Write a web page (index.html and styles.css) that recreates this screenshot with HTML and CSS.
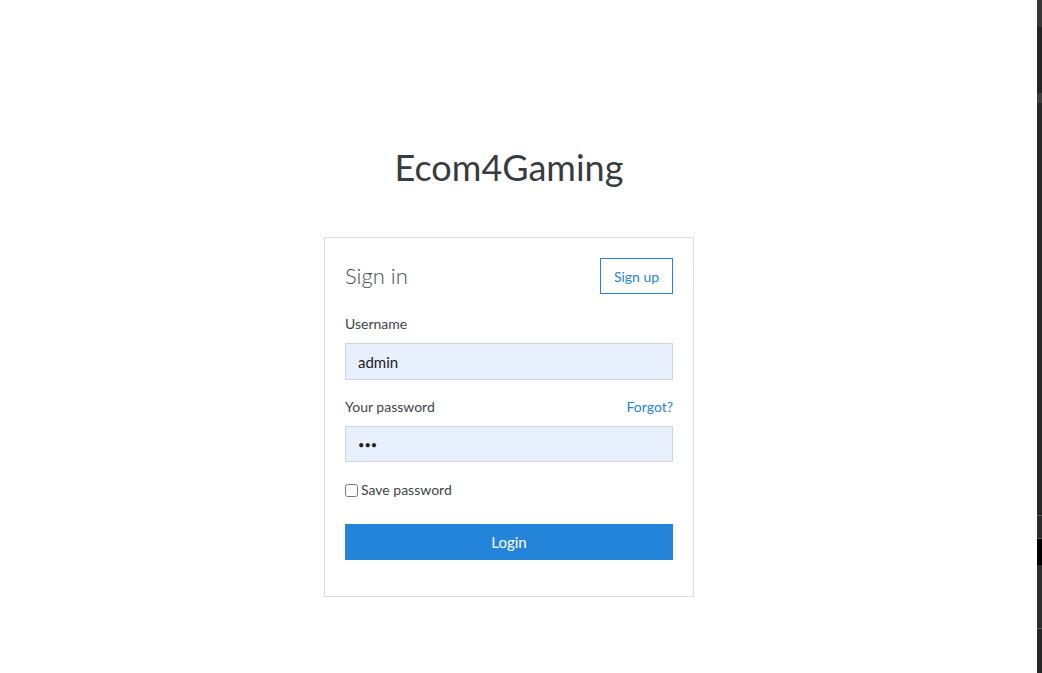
FILE: index.html
```html
<!DOCTYPE html>
<html lang="en">
<head>
<meta charset="utf-8">
<title>Ecom4Gaming - Sign in</title>
<link rel="stylesheet" href="styles.css">
</head>
<body>
<div class="page">
  <main class="main">
    <h1 class="brand">Ecom4Gaming</h1>
    <div class="card">
      <div class="card-head">
        <h2 class="card-title">Sign in</h2>
        <a class="btn-outline" href="#">Sign up</a>
      </div>
      <form class="form">
        <div class="field field-first">
          <label class="label" for="username">Username</label>
          <input class="input" id="username" type="text" value="admin">
        </div>
        <div class="field field-next">
          <div class="label-row">
            <label class="label" for="password">Your password</label>
            <a class="link" href="#">Forgot?</a>
          </div>
          <input class="input input-pass" id="password" type="password" value="abc">
        </div>
        <label class="check">
          <input class="check-box" type="checkbox">
          <span>Save password</span>
        </label>
        <button class="btn-primary" type="button">Login</button>
      </form>
    </div>
  </main>
  <aside class="side">
    <div class="seg seg-a"></div>
    <div class="seg seg-b"></div>
    <div class="seg seg-c"></div>
    <div class="seg seg-d"></div>
    <div class="seg seg-e"></div>
    <div class="seg seg-f"></div>
    <div class="seg seg-g"></div>
  </aside>
</div>
</body>
</html>
```
FILE: styles.css
```css
* { box-sizing: border-box; }
html, body { margin: 0; padding: 0; height: 100%; }
body {
  font-family: Lato, "Noto Sans", sans-serif;
  color: #3d4145;
  background: #fff;
  overflow: hidden;
}
.page {
  display: flex;
  height: 673px;
}
.main {
  flex: 1;
  padding: 143px 19px 0 0;
  display: flex;
  flex-direction: column;
  align-items: center;
}
.brand {
  margin: 0;
  font-size: 36px;
  font-weight: 400;
  line-height: 48px;
  color: #383c40;
}
.card {
  margin-top: 46px;
  width: 370px;
  border: 1px solid #dcdcdc;
  padding: 20px 20px 36px;
}
.card-head {
  display: flex;
  justify-content: space-between;
  align-items: center;
  height: 36px;
}
.card-title {
  margin: 0 0 2px;
  font-size: 22px;
  font-weight: 300;
  color: #4a4e52;
}
.btn-outline {
  display: flex;
  align-items: center;
  justify-content: center;
  width: 73px;
  height: 36px;
  border: 1px solid #2384d9;
  color: #2384d9;
  font-size: 14px;
  text-decoration: none;
}
.form { display: flex; flex-direction: column; }
.field { display: flex; flex-direction: column; }
.field-first { margin-top: 20px; }
.field-next { margin-top: 17px; }
.label-row { display: flex; justify-content: space-between; align-items: center; }
.label {
  font-size: 14px;
  line-height: 20px;
  color: #40444a;
  margin-bottom: 9px;
}
.link {
  font-size: 14px;
  line-height: 20px;
  color: #2384d9;
  text-decoration: none;
  margin-bottom: 9px;
}
.input {
  width: 100%;
  height: 37px;
  margin: 0;
  padding: 0 12px;
  border: 1px solid #cfd4da;
  background: #e8f0fe;
  font-family: inherit;
  font-size: 15px;
  color: #222;
  outline: none;
}
.input-pass { height: 36px; font-size: 11px; letter-spacing: 0; }
.check {
  margin-top: 18px;
  display: flex;
  align-items: center;
  gap: 3px;
  font-size: 14px;
  color: #40444a;
  line-height: 20px;
}
.check-box { margin: 0; width: 13px; height: 13px; }
.btn-primary {
  margin-top: 24px;
  height: 36px;
  width: 100%;
  border: 0;
  background: #2384d9;
  color: #fff;
  font-family: inherit;
  font-size: 15px;
}
.side {
  width: 5px;
  display: flex;
  flex-direction: column;
  background: #262626;
}
.seg { flex: none; }
.seg-a { height: 27px; background: #363636; }
.seg-b { height: 66px; background: #242424; }
.seg-c { height: 10px; background: #3e3e3e; }
.seg-d { height: 413px; background: #272727; border-bottom: 1px solid #555; }
.seg-e { height: 23px; background: #2b2b2b; border-bottom: 1px solid #555; }
.seg-f { height: 26px; background: #000; }
.seg-g { height: 64px; background: #2d2d2d; border-bottom: 1px solid #555; }
```
